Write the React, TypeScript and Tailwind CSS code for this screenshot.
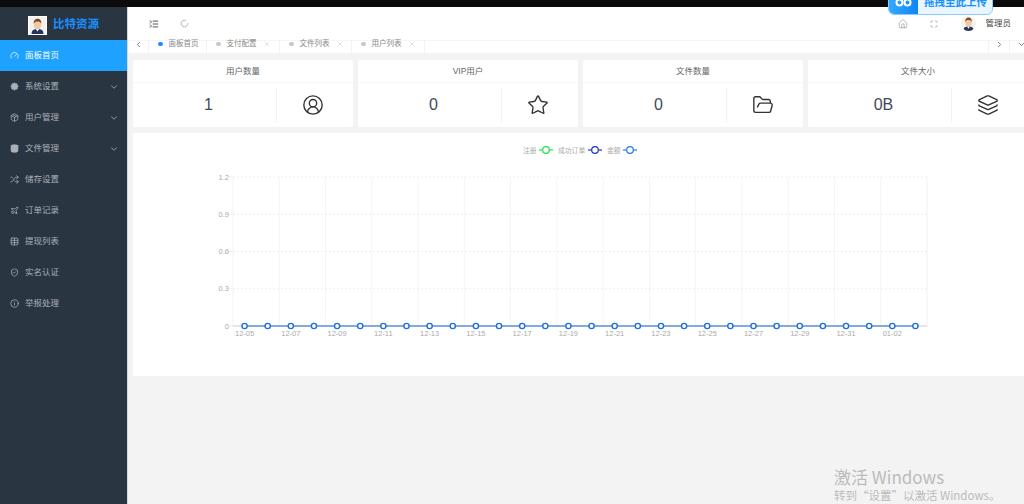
import React from "react";
import {
  ChevronDown,
  ChevronLeft,
  ChevronRight,
  CircleUserRound,
  Cog,
  Database,
  FolderOpen,
  Gauge,
  Home,
  Info,
  Layers,
  ListCollapse,
  LoaderCircle,
  Maximize,
  Package,
  Plane,
  ShieldCheck,
  Shuffle,
  Star,
  Table,
  X,
} from "lucide-react";

const font = { fontFamily: '"Liberation Sans", "Noto Sans CJK SC", sans-serif' };

const menu = [
  { label: "面板首页", icon: Gauge, active: true },
  { label: "系统设置", icon: Cog, arrow: true, filled: true },
  { label: "用户管理", icon: Package, arrow: true },
  { label: "文件管理", icon: Database, arrow: true, filled: true },
  { label: "储存设置", icon: Shuffle },
  { label: "订单记录", icon: Plane },
  { label: "提现列表", icon: Table },
  { label: "实名认证", icon: ShieldCheck },
  { label: "举报处理", icon: Info },
];

const tabs = [
  { label: "面板首页", active: true, width: "w-[58px]" },
  { label: "支付配置", width: "w-[73px]" },
  { label: "文件列表", width: "w-[72px]" },
  { label: "用户列表", width: "w-[73px]" },
];

const stats = [
  { title: "用户数量", value: "1", icon: CircleUserRound },
  { title: "VIP用户", value: "0", icon: Star },
  { title: "文件数量", value: "0", icon: FolderOpen },
  { title: "文件大小", value: "0B", icon: Layers },
];

const Avatar = ({ size }: { size: number }) => (
  <svg width={size} height={size} viewBox="0 0 20 20">
    <rect width="20" height="20" fill="#f4f1ee" />
    <path d="M3 20c0-5 3-6 7-6s7 1 7 6z" fill="#24345a" />
    <path d="M8 14l2 3 2-3z" fill="#fff" />
    <ellipse cx="10" cy="9" rx="4.2" ry="5" fill="#f1c8a0" />
    <path d="M5.6 8c-.5-4 2-6 4.6-6s4.6 2 4.2 6c-1-2-2-2.6-4.4-2.6S6.600 6 5.600 8z" fill="#7a4a26" />
  </svg>
);

const Sidebar = () => (
  <aside className="flex w-[127px] shrink-0 flex-col bg-[#2a3542]">
    <div className="flex h-[33px] items-center pl-[28px] pt-[3px]">
      <div className="h-[19px] w-[19px] overflow-hidden border border-white bg-white">
        <Avatar size={17} />
      </div>
      <span className="ml-[6px] text-[11.5px] font-bold text-[#1890ff]">比特资源</span>
    </div>
    {menu.map((item) => (
      <div
        key={item.label}
        className={`flex h-[31px] items-center pl-[10px] pr-[8px] ${
          item.active ? "bg-[#1ea1ff] text-white" : "text-[#a9b0b8]"
        }`}
      >
        <item.icon size={9} strokeWidth={2} fill={item.filled ? "currentColor" : "none"} />
        <span className="ml-[6px] flex-1 text-[8.5px]">{item.label}</span>
        {item.arrow && <ChevronDown size={10} strokeWidth={2} />}
      </div>
    ))}
  </aside>
);

const Header = () => (
  <header className="flex h-[33px] items-center bg-white pl-[21px] text-[#555]">
    <ListCollapse size={10} strokeWidth={2} className="text-[#333]" />
    <LoaderCircle size={9} strokeWidth={1.5} className="ml-[21px] text-[#8a7a66]" />
    <div className="ml-auto flex items-center pr-[13px]">
      <Home size={10} strokeWidth={1.4} className="text-[#888]" />
      <Maximize size={8} strokeWidth={1.6} className="ml-[22px] text-[#888]" />
      <div className="ml-[23px] h-[15px] w-[15px] overflow-hidden rounded-full">
        <Avatar size={15} />
      </div>
      <span className="ml-[9px] text-[8.5px] text-[#444]">管理员</span>
    </div>
  </header>
);

const TabBar = () => (
  <div className="flex h-[13px] border-t border-[#f5f5f5] bg-white text-[#888]">
    <div className="flex h-full w-[21px] items-center justify-center border-r border-[#f3f3f3] pb-[6px] text-[#555]">
      <ChevronLeft size={9} />
    </div>
    {tabs.map((tab) => (
      <div key={tab.label} className={`flex h-full items-center border-r border-[#f3f3f3] pb-[6px] pl-[9px] ${tab.width}`}>
        <span className={`h-[4.5px] w-[4.5px] rounded-full ${tab.active ? "bg-[#1890ff]" : "bg-[#c8c8c8]"}`} />
        <span className="ml-[6px] text-[7.5px] leading-none">{tab.label}</span>
        {!tab.active && <X size={8} strokeWidth={1} className="ml-[6px] text-[#aaa]" />}
      </div>
    ))}
    <div className="ml-auto flex h-full w-[22px] items-center justify-center border-x border-[#f3f3f3] pb-[6px] text-[#555]">
      <ChevronRight size={9} />
    </div>
    <div className="flex h-full w-[14px] items-center pb-[6px] pl-[7px] text-[#555]">
      <ChevronDown size={9} className="shrink-0" />
    </div>
  </div>
);

const StatCard = ({ title, value, icon: Icon }: (typeof stats)[number]) => (
  <div className="w-[220px] shrink-0 rounded-[2px] bg-white">
    <div className="flex h-[23px] items-center justify-center border-b border-[#f7f7f7] text-[8.5px] text-[#666]">
      {title}
    </div>
    <div className="flex h-[44px] items-center">
      <div className="flex h-[35px] w-[144px] items-center justify-center border-r border-[#f2f2f6] pl-[8px] text-[16px] text-[#3d4a5c]">
        {value}
      </div>
      <div className="flex flex-1 items-center justify-center pr-[4px] text-[#333]">
        <Icon size={22} strokeWidth={1.5} />
      </div>
    </div>
  </div>
);

const Chart = () => {
  const left = 100;
  const right = 794;
  const top = 44;
  const bottom = 193;
  const step = (right - left) / 30;
  const days = Array.from({ length: 30 }, (_, i) => left + step * (i + 0.5));
  const dates = ["12-05", "12-07", "12-09", "12-11", "12-13", "12-15", "12-17", "12-19", "12-21", "12-23", "12-25", "12-27", "12-29", "12-31", "01-02"];
  const yLabels = ["1.2", "0.9", "0.6", "0.3", "0"];

  return (
    <svg width="891" height="243" viewBox="0 0 891 243" className="block" style={font}>
      <g fontSize="6.8" fill="#aaa">
        <text x="390" y="20">注册</text>
        <text x="425" y="20">成功订单</text>
        <text x="474" y="20">金额</text>
      </g>
      {[
        { x: 406, color: "#1ee24a" },
        { x: 455, color: "#2231c8" },
        { x: 490, color: "#2a78e8" },
      ].map((m) => (
        <g key={m.x} fill="#fff" stroke={m.color} strokeWidth="1.2">
          <path d="M0 0h14" transform={`translate(${m.x} 17)`} />
          <circle cx={m.x + 7} cy="17" r="3.3" />
        </g>
      ))}
      {dates.map((_, i) => (
        <path key={i} d={`M${left + step * 2 * i} ${top}V${bottom}`} stroke="#f4f4f4" strokeWidth="1" />
      ))}
      <path d={`M${right} ${top}V${bottom}`} stroke="#f2f2f2" />
      {yLabels.map((label, i) => {
        const y = top + ((bottom - top) / 4) * i;
        return (
          <g key={label}>
            {i < 4 && <path d={`M${left} ${y}H${right}`} stroke="#eeeeee" strokeDasharray="2 2" />}
            <path d={`M${left - 4} ${y}H${left}`} stroke="#eee" />
            <text x={left - 4} y={y + 2.5} fontSize="7.5" fill="#aaa" textAnchor="end">
              {label}
            </text>
          </g>
        );
      })}
      <path d={`M${left} ${bottom}H${right}`} stroke="#ccc" />
      <path d={`M${days[0]} ${bottom}H${days[29]}`} stroke="#1f6fe0" strokeWidth="1.2" />
      {days.map((x) => (
        <circle key={x} cx={x} cy={bottom} r="2.6" fill="#fff" stroke="#1f6fe0" strokeWidth="1.4" />
      ))}
      {dates.map((d, i) => (
        <text key={d} x={days[i * 2]} y={bottom + 10} fontSize="7.5" fill="#aaa" textAnchor="middle">
          {d}
        </text>
      ))}
    </svg>
  );
};

export default function App() {
  return (
    <div className="relative flex h-[504px] w-[1024px] flex-col overflow-hidden bg-[#f3f3f3]" style={font}>
      <div className="h-[7px] shrink-0 bg-[#0b0b0b]" />
      <div className="flex min-h-0 flex-1">
        <Sidebar />
        <main className="min-w-0 flex-1 border-l border-[#d5d9dd]">
          <Header />
          <TabBar />
          <div className="flex gap-[5px] pl-[5px] pt-[7px]">
            {stats.map((s) => (
              <StatCard key={s.title} {...s} />
            ))}
          </div>
          <div className="ml-[5px] mt-[6px] h-[243px] bg-white">
            <Chart />
          </div>
        </main>
      </div>

      {/* upload widget floating over the top bar */}
      <div className="absolute right-[31px] top-[-10px] flex h-[25px] w-[105px] items-center overflow-hidden rounded-b-[6px] border border-[#8ccbff] bg-[#eaf6ff]">
        <div className="flex h-full w-[29px] shrink-0 items-center justify-center bg-gradient-to-r from-[#33a9ff] to-[#0b86f5]">
          <svg width="17" height="9" viewBox="0 0 17 9" fill="none" stroke="#fff" strokeWidth="2">
            <circle cx="4.5" cy="4.5" r="3" />
            <circle cx="12.5" cy="4.5" r="3" />
          </svg>
        </div>
        <span className="ml-[6px] whitespace-nowrap text-[10.5px] font-bold text-[#1890ff]">拖拽至此上传</span>
      </div>

      {/* windows activation watermark */}
      <div
        className="absolute left-[834px] top-[466px] whitespace-nowrap text-[#bbbbbb]"
        style={{ fontFamily: '"Noto Sans CJK SC", sans-serif' }}
      >
        <div className="text-[17px] leading-[22px]">激活 Windows</div>
        <div className="text-[11.5px] leading-[15px]">转到“设置”以激活 Windows。</div>
      </div>
    </div>
  );
}
